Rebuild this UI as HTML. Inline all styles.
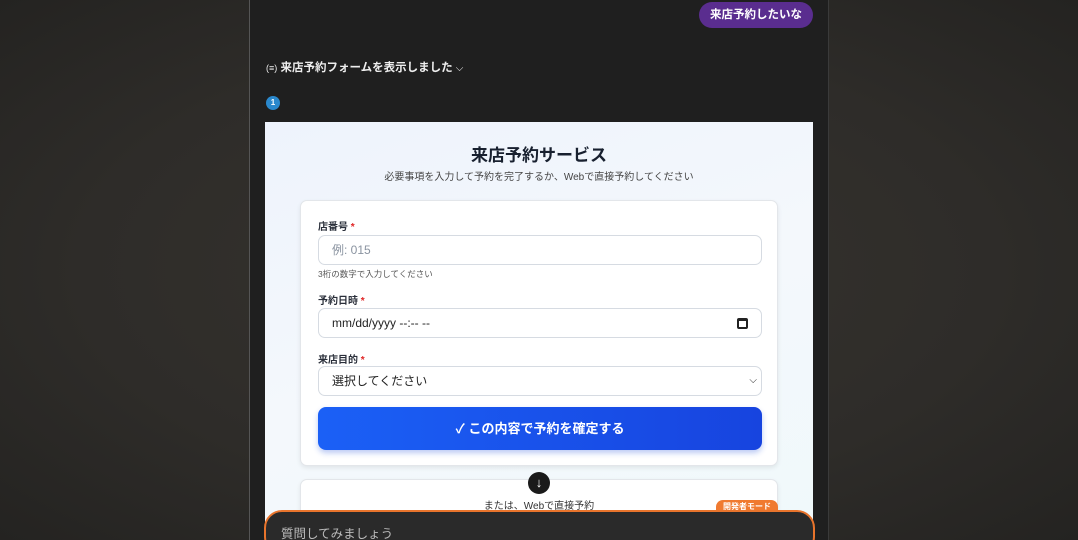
<!DOCTYPE html>
<html><head><meta charset="utf-8"><style>
*{margin:0;padding:0;box-sizing:border-box}
html{width:1078px;height:540px;overflow:hidden}
body{width:1078px;height:540px;overflow:hidden;position:relative;background:radial-gradient(ellipse at 50% 50%,#37342f 0%,#2e2c29 60%,#242321 100%);font-family:"Liberation Sans","Noto Sans CJK JP",sans-serif}
.a{position:absolute}
.panel{left:249px;top:0;width:580px;height:540px;background:#1f1f1f;border-left:1px solid #555;border-right:1px solid #3a3a3a}
.pill{left:699px;top:2px;width:114px;height:26px;background:#5a2d8f;border-radius:13px;color:#fff;font-size:11.5px;font-weight:bold;text-align:center;line-height:26px}
.frame{left:265px;top:122px;width:548px;height:418px;background:linear-gradient(160deg,#eef3fc 0%,#f4f8fc 50%,#f0f9fb 100%);overflow:hidden}
.card{left:35px;width:478px;background:#fff;border:1px solid #e3e6ea;border-radius:7px;box-shadow:0 2px 5px rgba(0,0,0,.08)}
.lbl{font-size:10px;font-weight:bold;color:#2a2f3a}
.lbl span{color:#e02424}
.inp{left:17px;width:444px;height:30px;border:1px solid #d6dbe2;border-radius:7px;background:#fff;font-size:12px;color:#222;line-height:28px;padding-left:13px}
</style></head><body>
<div class="a panel"></div>
<div class="a pill">来店予約したいな</div>
<div class="a" style="left:266px;top:60px;color:#eee;font-size:11.5px;font-weight:bold;line-height:16px">
<span style="font-size:9px;font-weight:normal">(≡)</span> 来店予約フォームを表示しました <span style="font-weight:normal;font-size:10px">⌵</span></div>
<div class="a" style="left:266px;top:96px;width:14px;height:14px;border-radius:50%;background:#2a88cc;color:#fff;font-size:8px;font-weight:bold;text-align:center;line-height:14px">1</div>
<div class="a frame">
  <div class="a" style="left:0;width:548px;top:19px;text-align:center;font-size:17px;font-weight:bold;color:#18202f">来店予約サービス</div>
  <div class="a" style="left:0;width:548px;top:46px;text-align:center;font-size:10px;color:#444">必要事項を入力して予約を完了するか、Webで直接予約してください</div>
  <div class="a card" style="top:78px;height:266px">
    <div class="a lbl" style="left:17px;top:17px">店番号 <span>*</span></div>
    <div class="a inp" style="top:34px;color:#8a93a0">例: 015</div>
    <div class="a" style="left:17px;top:67px;font-size:8.5px;color:#555">3桁の数字で入力してください</div>
    <div class="a lbl" style="left:17px;top:91px">予約日時 <span>*</span></div>
    <div class="a inp" style="top:107px">mm/dd/yyyy --:-- --
      <div class="a" style="right:13px;top:9px;width:11px;height:11px;border:2px solid #222;border-top-width:3px;border-radius:2px"></div></div>
    <div class="a lbl" style="left:17px;top:150px">来店目的 <span>*</span></div>
    <div class="a inp" style="top:165px">選択してください<span class="a" style="right:4px;top:0;font-size:10px">⌵</span></div>
    <div class="a" style="left:17px;top:206px;width:444px;height:43px;border-radius:8px;background:linear-gradient(90deg,#1b60f6,#1744df);color:#fff;font-size:13px;font-weight:bold;text-align:center;line-height:43px;box-shadow:0 3px 6px rgba(30,80,220,.3)">✓ この内容で予約を確定する</div>
  </div>
  <div class="a card" style="top:357px;height:80px"></div>
  <div class="a" style="left:263px;top:350px;width:22px;height:22px;border-radius:50%;background:#1a1a1a;color:#fff;font-size:13px;text-align:center;line-height:22px">↓</div>
  <div class="a" style="left:0;width:548px;top:375px;text-align:center;font-size:10px;color:#333">または、Webで直接予約</div>
  <div class="a" style="left:451px;top:378px;width:62px;height:14px;border-radius:7px 7px 0 0;background:#f07a30;color:#fff;font-size:8px;font-weight:bold;text-align:center;line-height:14px">開発者モード</div>
</div>
<div class="a" style="left:264px;top:510px;width:551px;height:45px;background:#2a2a2a;border:2px solid #e8742c;border-radius:18px"></div>
<div class="a" style="left:281px;top:523px;color:#bbb;font-size:12.5px">質問してみましょう</div>
</body></html>
